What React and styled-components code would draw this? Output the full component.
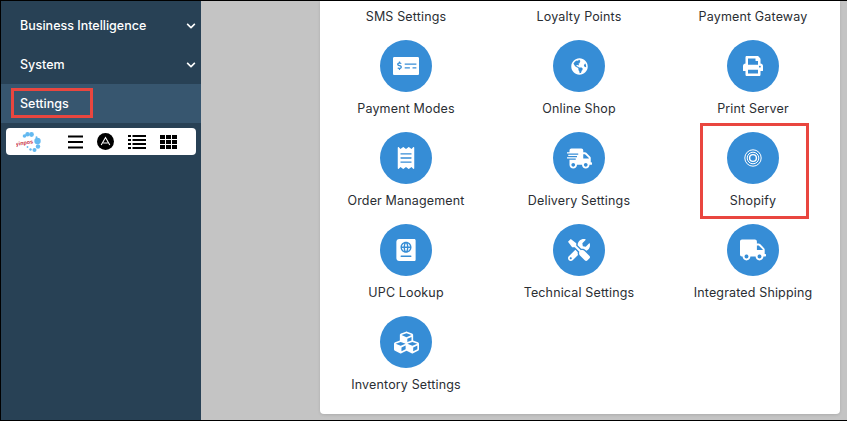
import styled, { createGlobalStyle } from "styled-components";
import {
  FaChevronDown,
  FaCubes,
  FaGlobeAmericas,
  FaMoneyCheckAlt,
  FaPassport,
  FaPrint,
  FaReceipt,
  FaShippingFast,
  FaTools,
  FaTruck,
} from "react-icons/fa";

const GlobalStyle = createGlobalStyle`
  html, body {
    margin: 0;
    padding: 0;
    background: #c4c4c4;
    font-family: "Inter", "Liberation Sans", sans-serif;
  }
`;

const Frame = styled.div`
  width: 847px;
  height: 421px;
  box-sizing: border-box;
  display: flex;
  overflow: hidden;
  border: 1px solid #000;
  border-right: 0;
  background: #c4c4c4;
`;

const Sidebar = styled.aside`
  width: 200px;
  flex: none;
  padding-top: 5px;
  background: #284155;
`;

const NavItem = styled.div`
  position: relative;
  height: 39px;
  display: flex;
  align-items: center;
  justify-content: space-between;
  padding: 0 5px 0 19px;
  color: #fff;
  font-size: 12.5px;
  font-weight: 500;
  background: ${(props) => (props.$active ? "#37566f" : "transparent")};
`;

const Marker = styled.span`
  position: absolute;
  box-sizing: border-box;
  border: 3px solid #e9463f;
  pointer-events: none;
`;

const SettingsMarker = styled(Marker)`
  left: 10px;
  top: 4px;
  width: 82px;
  height: 30px;
`;

const Toolbar = styled.div`
  height: 27px;
  margin: 5px 5px 0;
  padding: 0 19px 0 10px;
  display: flex;
  align-items: center;
  border-radius: 4px;
  background: #fff;
  color: #000;
`;

const ToolIcons = styled.div`
  margin-left: auto;
  display: flex;
  align-items: center;
  gap: 14px;
`;

const Content = styled.main`
  flex: 1;
  padding: 0 7px 6px 119px;
`;

const Card = styled.section`
  height: 100%;
  box-sizing: border-box;
  padding-top: 6px;
  display: grid;
  grid-template-columns: 172px 174px 174px;
  grid-auto-rows: min-content;
  align-content: start;
  background: #fff;
  border-radius: 0 0 4px 4px;
  box-shadow: 0 1px 3px rgba(0, 0, 0, 0.12);
`;

const Tile = styled.div`
  position: relative;
  height: ${(props) => (props.$labelOnly ? "20px" : "92px")};
  display: flex;
  flex-direction: column;
  align-items: center;
`;

const Circle = styled.div`
  width: 52px;
  height: 52px;
  margin-top: 13px;
  flex: none;
  display: flex;
  align-items: center;
  justify-content: center;
  border-radius: 50%;
  background: #368dd6;
  color: #fff;
`;

const Label = styled.div`
  margin-top: ${(props) => (props.$labelOnly ? "2px" : "9px")};
  color: #2a2e33;
  font-size: 12.5px;
  line-height: 16px;
  letter-spacing: 0.15px;
  white-space: nowrap;
`;

const ShopifyMarker = styled(Marker)`
  left: 34px;
  top: 4px;
  width: 109px;
  height: 96px;
`;

function Logo() {
  return (
    <svg width="26" height="22" viewBox="0 0 26 22">
      <g fill="#63b9f0">
        <circle cx="8.5" cy="5" r="1.8" />
        <circle cx="11.5" cy="3.2" r="2.2" />
        <circle cx="15.5" cy="3.5" r="2.4" />
        <circle cx="20.5" cy="6.2" r="1" />
        <circle cx="21.5" cy="10" r="3.2" />
        <circle cx="22" cy="15.5" r="2.2" />
        <circle cx="18.5" cy="19" r="2" />
        <circle cx="14.5" cy="18.5" r="1.2" />
        <circle cx="11.5" cy="16" r="0.9" />
      </g>
      <text
        x="0"
        y="15"
        fontSize="5.4"
        fontWeight="700"
        fontFamily="Liberation Sans, sans-serif"
        fill="#c8323f"
        transform="rotate(-9 0 15)"
      >
        yinpos
      </text>
    </svg>
  );
}

function BarsIcon() {
  return (
    <svg width="15" height="14" viewBox="0 0 15 14" fill="#000">
      <rect y="0.5" width="15" height="2" />
      <rect y="6" width="15" height="2" />
      <rect y="11.5" width="15" height="2" />
    </svg>
  );
}

function AntIcon() {
  return (
    <svg width="17" height="17" viewBox="0 0 17 17">
      <circle cx="8.5" cy="8.5" r="8.5" fill="#000" />
      <path d="M4.2 12 L8.5 4.5 L12.8 12 M6.2 10 H10.8" fill="none" stroke="#fff" strokeWidth="1.1" />
    </svg>
  );
}

function ListIcon() {
  return (
    <svg width="18" height="14" viewBox="0 0 18 14" fill="#000">
      <rect y="0" width="3" height="2" />
      <rect x="4.5" y="0" width="13.5" height="2" />
      <rect y="4" width="3" height="2" />
      <rect x="4.5" y="4" width="13.5" height="2" />
      <rect y="8" width="3" height="2" />
      <rect x="4.5" y="8" width="13.5" height="2" />
      <rect y="12" width="3" height="2" />
      <rect x="4.5" y="12" width="13.5" height="2" />
    </svg>
  );
}

function GridIcon() {
  const cells = [];
  for (let row = 0; row < 3; row++) {
    for (let col = 0; col < 3; col++) {
      cells.push(<rect key={`${row}-${col}`} x={col * 6} y={row * 5} width="5" height="4" />);
    }
  }
  return (
    <svg width="17" height="14" viewBox="0 0 17 14" fill="#000">
      {cells}
    </svg>
  );
}

function ShopifyIcon() {
  return (
    <svg width="18" height="18" viewBox="0 0 18 18" fill="none" stroke="#fff">
      <circle cx="9" cy="9" r="8.2" strokeWidth="1" />
      <circle cx="9" cy="9" r="5.8" strokeWidth="1" />
      <circle cx="9" cy="9" r="3.4" strokeWidth="1.4" />
    </svg>
  );
}

const rows = [
  { label: "Payment Modes", icon: <FaMoneyCheckAlt size={26} /> },
  { label: "Online Shop", icon: <FaGlobeAmericas size={17} /> },
  { label: "Print Server", icon: <FaPrint size={20} /> },
  { label: "Order Management", icon: <FaReceipt size={22} /> },
  { label: "Delivery Settings", icon: <FaShippingFast size={25} /> },
  { label: "Shopify", icon: <ShopifyIcon />, marked: true },
  { label: "UPC Lookup", icon: <FaPassport size={22} /> },
  { label: "Technical Settings", icon: <FaTools size={22} /> },
  { label: "Integrated Shipping", icon: <FaTruck size={26} /> },
  { label: "Inventory Settings", icon: <FaCubes size={25} /> },
];

export default function App() {
  return (
    <>
      <GlobalStyle />
      <Frame>
        <Sidebar>
          <NavItem>
            Business Intelligence
            <FaChevronDown size={10} />
          </NavItem>
          <NavItem>
            System
            <FaChevronDown size={10} />
          </NavItem>
          <NavItem $active>
            Settings
            <SettingsMarker />
          </NavItem>
          <Toolbar>
            <Logo />
            <ToolIcons>
              <BarsIcon />
              <AntIcon />
              <ListIcon />
              <GridIcon />
            </ToolIcons>
          </Toolbar>
        </Sidebar>
        <Content>
          <Card>
            <Tile $labelOnly>
              <Label $labelOnly>SMS Settings</Label>
            </Tile>
            <Tile $labelOnly>
              <Label $labelOnly>Loyalty Points</Label>
            </Tile>
            <Tile $labelOnly>
              <Label $labelOnly>Payment Gateway</Label>
            </Tile>
            {rows.map((row) => (
              <Tile key={row.label}>
                <Circle>{row.icon}</Circle>
                <Label>{row.label}</Label>
                {row.marked && <ShopifyMarker />}
              </Tile>
            ))}
          </Card>
        </Content>
      </Frame>
    </>
  );
}
